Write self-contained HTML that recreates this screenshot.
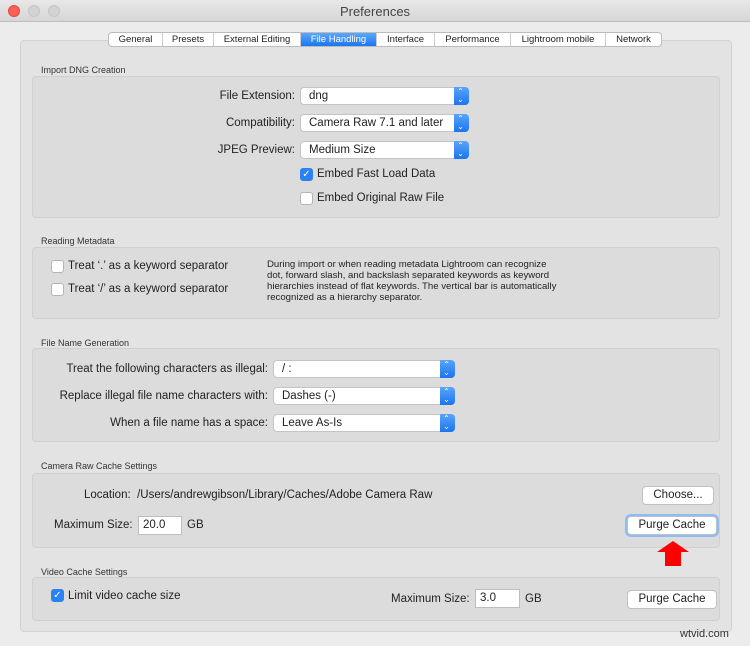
<!DOCTYPE html><html><head><style>
*{box-sizing:border-box;margin:0;padding:0}
body{width:750px;height:646px;background:#ececec;font-family:"Liberation Sans",sans-serif;color:#222;position:relative;overflow:hidden;font-size:11.5px}
.a{position:absolute;white-space:nowrap}
.tb{left:0;top:0;width:750px;height:22px;background:linear-gradient(#e8e8e8,#d6d6d6);border-bottom:1px solid #bdbdbd}
.dot{width:12px;height:12px;border-radius:50%;top:5px}
.outer{left:20px;top:40px;width:712px;height:592px;background:#e3e3e3;border:1px solid #d2d2d2;border-radius:4px}
.box{background:#dcdcdc;border:1px solid #d0d0d0;border-radius:4px;left:32px;width:688px}
.sec{font-size:9px;color:#333;left:41px}
.tabs{left:108px;top:32px;height:15px;display:flex;border:1px solid #bcbcbc;border-radius:4px;background:#fff;overflow:hidden;font-size:9.5px}
.tabs div{border-right:1px solid #ccc;text-align:center;line-height:13px}
.tabs div:last-child{border:0}
.tabs .on{background:linear-gradient(#5ba7fb,#1b76f0);color:#fff}
.pop{height:18px;background:#fff;border:1px solid #c4c4c4;border-radius:4px;padding-left:8px;line-height:16px;font-size:11.5px}
.pop:after{content:"";position:absolute;right:-1px;top:-1px;width:15px;height:18px;background:linear-gradient(#5aa5fa,#1c74ee);border-radius:0 4px 4px 0}
.pop i{position:absolute;right:3px;top:0;color:#fff;font-style:normal;font-size:8px;z-index:2;line-height:8px;text-align:center;width:9px}
.lbl{text-align:right}
.cb{width:13px;height:13px;border:1px solid #b5b5b5;border-radius:3px;background:#fff}
.cb.on{background:#2a82f6;border-color:#2a82f6;color:#fff;font-size:10px;line-height:11px;text-align:center}
.btn{height:19px;background:#fff;border:1px solid #c0c0c0;border-radius:4px;text-align:center;line-height:17px;font-size:11.5px}
.inp{height:19px;background:#fff;border:1px solid #bdbdbd;padding-left:4px;line-height:17px}
</style></head><body>
<div class="a tb"></div>
<div class="a dot" style="left:8px;background:#fc5f57;border:1px solid #e04a43"></div>
<div class="a dot" style="left:28px;background:#d3d3d3;border:1px solid #c4c4c4"></div>
<div class="a dot" style="left:48px;background:#d3d3d3;border:1px solid #c4c4c4"></div>
<div class="a" style="left:0;width:750px;top:4px;text-align:center;font-size:13px;color:#444">Preferences</div>
<div class="a outer"></div>
<div class="a tabs">
<div style="width:54px">General</div><div style="width:51px">Presets</div><div style="width:87px">External Editing</div><div class="on" style="width:76px">File Handling</div><div style="width:58px">Interface</div><div style="width:76px">Performance</div><div style="width:95px">Lightroom mobile</div><div style="width:55px">Network</div>
</div>

<div class="a sec" style="top:65px">Import DNG Creation</div>
<div class="a box" style="top:76px;height:142px"></div>
<div class="a lbl" style="right:455px;top:90px">File Extension:</div>
<div class="a pop" style="left:300px;top:87px;width:169px">dng<i>⌃<br>⌄</i></div>
<div class="a lbl" style="right:455px;top:117px">Compatibility:</div>
<div class="a pop" style="left:300px;top:114px;width:169px">Camera Raw 7.1 and later<i>⌃<br>⌄</i></div>
<div class="a lbl" style="right:455px;top:144px">JPEG Preview:</div>
<div class="a pop" style="left:300px;top:141px;width:169px">Medium Size<i>⌃<br>⌄</i></div>
<div class="a cb on" style="left:300px;top:168px">✓</div>
<div class="a" style="left:317px;top:168px">Embed Fast Load Data</div>
<div class="a cb" style="left:300px;top:192px"></div>
<div class="a" style="left:317px;top:192px">Embed Original Raw File</div>

<div class="a sec" style="top:236px">Reading Metadata</div>
<div class="a box" style="top:247px;height:72px"></div>
<div class="a cb" style="left:51px;top:260px"></div>
<div class="a" style="left:68px;top:260px">Treat ‘.’ as a keyword separator</div>
<div class="a cb" style="left:51px;top:283px"></div>
<div class="a" style="left:68px;top:283px">Treat ‘/’ as a keyword separator</div>
<div class="a" style="left:267px;top:259px;font-size:9.6px;line-height:11px">During import or when reading metadata Lightroom can recognize<br>dot, forward slash, and backslash separated keywords as keyword<br>hierarchies instead of flat keywords. The vertical bar is automatically<br>recognized as a hierarchy separator.</div>

<div class="a sec" style="top:338px">File Name Generation</div>
<div class="a box" style="top:348px;height:94px"></div>
<div class="a lbl" style="right:482px;top:363px">Treat the following characters as illegal:</div>
<div class="a pop" style="left:273px;top:360px;width:182px">/ :<i>⌃<br>⌄</i></div>
<div class="a lbl" style="right:482px;top:390px">Replace illegal file name characters with:</div>
<div class="a pop" style="left:273px;top:387px;width:182px">Dashes (-)<i>⌃<br>⌄</i></div>
<div class="a lbl" style="right:482px;top:417px">When a file name has a space:</div>
<div class="a pop" style="left:273px;top:414px;width:182px">Leave As-Is<i>⌃<br>⌄</i></div>

<div class="a sec" style="top:461px">Camera Raw Cache Settings</div>
<div class="a box" style="top:473px;height:75px"></div>
<div class="a" style="left:84px;top:489px">Location:&nbsp; /Users/andrewgibson/Library/Caches/Adobe Camera Raw</div>
<div class="a btn" style="left:642px;top:486px;width:72px">Choose...</div>
<div class="a" style="left:54px;top:519px">Maximum Size:</div>
<div class="a inp" style="left:138px;top:516px;width:44px">20.0</div>
<div class="a" style="left:187px;top:519px">GB</div>
<div class="a btn" style="left:627px;top:516px;width:90px;box-shadow:0 0 0 2px #8fbcf5">Purge Cache</div>
<svg class="a" style="left:657px;top:541px" width="33" height="26"><polygon points="16,0 32,11 24,11 24,25 8,25 8,11 0,11" fill="#f00"/></svg>

<div class="a sec" style="top:567px">Video Cache Settings</div>
<div class="a box" style="top:577px;height:44px"></div>
<div class="a cb on" style="left:51px;top:589px">✓</div>
<div class="a" style="left:68px;top:590px">Limit video cache size</div>
<div class="a" style="left:391px;top:593px">Maximum Size:</div>
<div class="a inp" style="left:475px;top:589px;width:45px">3.0</div>
<div class="a" style="left:525px;top:593px">GB</div>
<div class="a btn" style="left:627px;top:590px;width:90px">Purge Cache</div>
<div class="a" style="left:680px;top:628px;font-size:11px;color:#333">wtvid.com</div>
</body></html>
